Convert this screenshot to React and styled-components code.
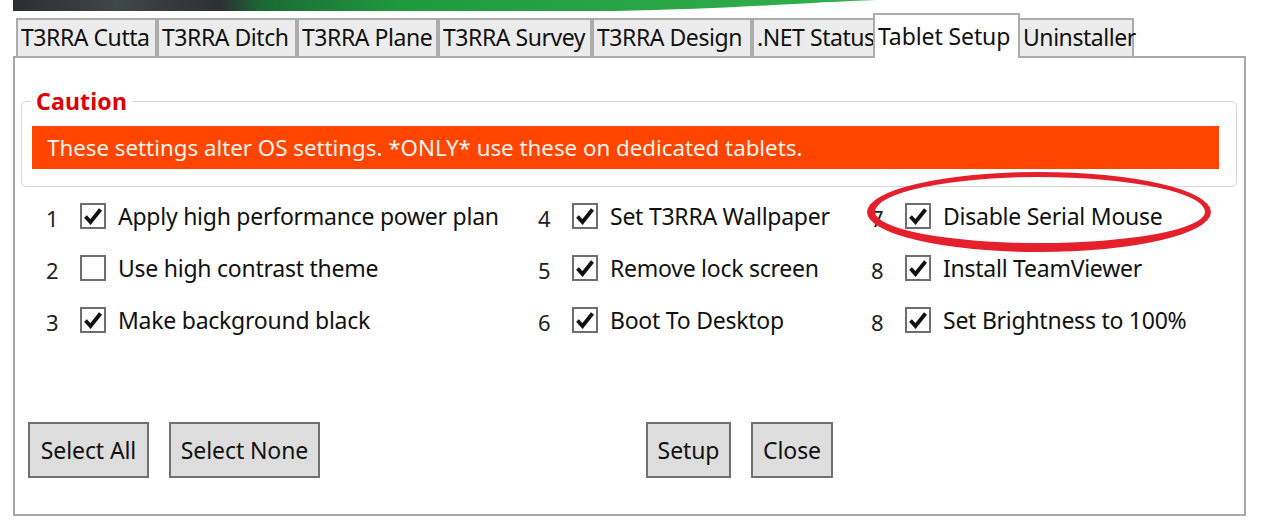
import React from "react";
import styled, { createGlobalStyle } from "styled-components";

const Global = createGlobalStyle`
  html, body { margin: 0; padding: 0; background: #ffffff; }
  body { font-family: "Noto Sans", "Open Sans", sans-serif; color: #111; }
`;

const Page = styled.div`
  width: 1262px;
  height: 529px;
  position: relative;
  overflow: hidden;
  padding-left: 13px;
  box-sizing: border-box;
`;

const Banner = styled.svg`
  display: block;
  width: 863px;
  height: 12px;
`;

const TabStrip = styled.div`
  display: flex;
  align-items: flex-end;
  height: 45px;
  margin-top: 1px;
  margin-bottom: -2px;
  padding-left: 3px;
  position: relative;
  z-index: 2;
`;

const Tab = styled.div`
  box-sizing: border-box;
  height: ${(p) => (p.$active ? "45px" : "40px")};
  padding: 0 0 2px 3px;
  background: ${(p) => (p.$active ? "#ffffff" : "#ececec")};
  border: 2px solid #acacac;
  border-bottom: ${(p) => (p.$active ? "none" : "2px solid #acacac")};
  display: flex;
  align-items: center;
  font-size: 23px;
  letter-spacing: ${(p) => (p.$active ? "-0.1px" : "-0.45px")};
  white-space: nowrap;
  color: #111;
  width: ${(p) => p.$w}px;
  margin-left: ${(p) => (p.$active ? "-2px" : "0")};
  margin-right: ${(p) => (p.$active ? "-2px" : "0")};
  position: relative;
  z-index: ${(p) => (p.$active ? 3 : 1)};
`;

const Panel = styled.div`
  box-sizing: border-box;
  width: 1233px;
  height: 460px;
  border: 2px solid #a8a8a8;
  position: relative;
  z-index: 1;
  padding: 32px 7px 0 6px;
  display: flex;
  flex-direction: column;
`;

const Group = styled.fieldset`
  margin: 0;
  padding: 14px 17px 17px 10px;
  border: 1.5px solid #d8d8d8;
  border-radius: 5px;
`;

const Legend = styled.legend`
  padding: 0 5px;
  margin-left: -1px;
  color: #e00000;
  font-weight: 700;
  font-size: 23px;
  line-height: 22px;
  letter-spacing: 0.2px;
`;

const Warning = styled.div`
  background: #ff4500;
  color: #fff4ec;
  height: 43px;
  display: flex;
  align-items: center;
  padding-left: 15px;
  font-size: 22.3px;
`;

const OptionGrid = styled.div`
  display: grid;
  grid-template-columns: 492px 333px 1fr;
  grid-auto-rows: 52px;
  margin-top: 3px;
  padding-left: 25px;
`;

const Option = styled.div`
  display: flex;
  align-items: center;
`;

const Num = styled.span`
  width: 34px;
  font-size: 22px;
  padding-top: 4px;
  box-sizing: border-box;
  color: #222;
`;

const Box = styled.span`
  box-sizing: border-box;
  width: 26px;
  height: 26px;
  border: 2px solid #6e6e6e;
  background: #fff;
  display: inline-flex;
  align-items: center;
  justify-content: center;
  margin-right: 12px;
  flex-shrink: 0;
`;

const Label = styled.span`
  font-size: 23px;
  letter-spacing: -0.25px;
  white-space: nowrap;
  color: #111;
`;

const ButtonRow = styled.div`
  display: flex;
  margin-top: 76px;
  padding-left: 7px;
`;

const Btn = styled.button`
  box-sizing: border-box;
  height: 56px;
  width: ${(p) => p.$w}px;
  margin-right: ${(p) => p.$gap || 0}px;
  background: #dddddd;
  border: 2px solid #707070;
  font-family: inherit;
  font-size: 23px;
  letter-spacing: -0.1px;
  color: #111;
  padding: 0;
`;

/* hand-drawn red highlight ring lying over the options */
const Ring = styled.div`
  position: absolute;
  left: 867px;
  top: 172px;
  width: 344px;
  height: 80px;
  box-sizing: border-box;
  border-style: solid;
  border-color: #e3202c;
  border-width: 5px 6px 9px 8px;
  border-radius: 50%;
  z-index: 5;
  pointer-events: none;
`;

const Check = () => (
  <svg width="20" height="18" viewBox="0 0 20 18">
    <path d="M2.5 9.5 L7.5 15 L17.5 2.5" fill="none" stroke="#111" strokeWidth="3.8" strokeLinecap="butt" strokeLinejoin="miter" />
  </svg>
);

const tabs = [
  ["T3RRA Cutta", 141],
  ["T3RRA Ditch", 140],
  ["T3RRA Plane", 141],
  ["T3RRA Survey", 154],
  ["T3RRA Design", 160],
  [".NET Status", 123],
  ["Tablet Setup", 147, true],
  ["Uninstaller", 116],
];

const options = [
  ["1", "Apply high performance power plan", true],
  ["4", "Set T3RRA Wallpaper", true],
  ["7", "Disable Serial Mouse", true],
  ["2", "Use high contrast theme", false],
  ["5", "Remove lock screen", true],
  ["8", "Install TeamViewer", true],
  ["3", "Make background black", true],
  ["6", "Boot To Desktop", true],
  ["8", "Set Brightness to 100%", true],
];

export default function App() {
  return (
    <>
      <Global />
      <Page>
        <Banner viewBox="0 0 863 12" preserveAspectRatio="none">
          <defs>
            <linearGradient id="g" x1="0" x2="1" y1="0" y2="0">
              <stop offset="0" stopColor="#2a2e32" />
              <stop offset="0.12" stopColor="#41464b" />
              <stop offset="0.24" stopColor="#2c3034" />
              <stop offset="0.29" stopColor="#1b6a35" />
              <stop offset="0.45" stopColor="#1f9a3e" />
              <stop offset="1" stopColor="#33b04f" />
            </linearGradient>
          </defs>
          <path d="M0 0 H863 C 800 2, 720 9, 600 11 L0 11 Z" fill="url(#g)" />
        </Banner>
        <TabStrip>
          {tabs.map(([t, w, a]) => (
            <Tab key={t} $w={w} $active={a}>
              {t}
            </Tab>
          ))}
        </TabStrip>
        <Panel>
          <Group>
            <Legend>Caution</Legend>
            <Warning>These settings alter OS settings. *ONLY* use these on dedicated tablets.</Warning>
          </Group>
          <OptionGrid>
            {options.map(([n, l, c], i) => (
              <Option key={i}>
                <Num>{n}</Num>
                <Box>{c && <Check />}</Box>
                <Label>{l}</Label>
              </Option>
            ))}
          </OptionGrid>
          <ButtonRow>
            <Btn $w={121} $gap={20}>Select All</Btn>
            <Btn $w={151} $gap={326}>Select None</Btn>
            <Btn $w={85} $gap={20}>Setup</Btn>
            <Btn $w={82}>Close</Btn>
          </ButtonRow>
        </Panel>
        <Ring />
      </Page>
    </>
  );
}
